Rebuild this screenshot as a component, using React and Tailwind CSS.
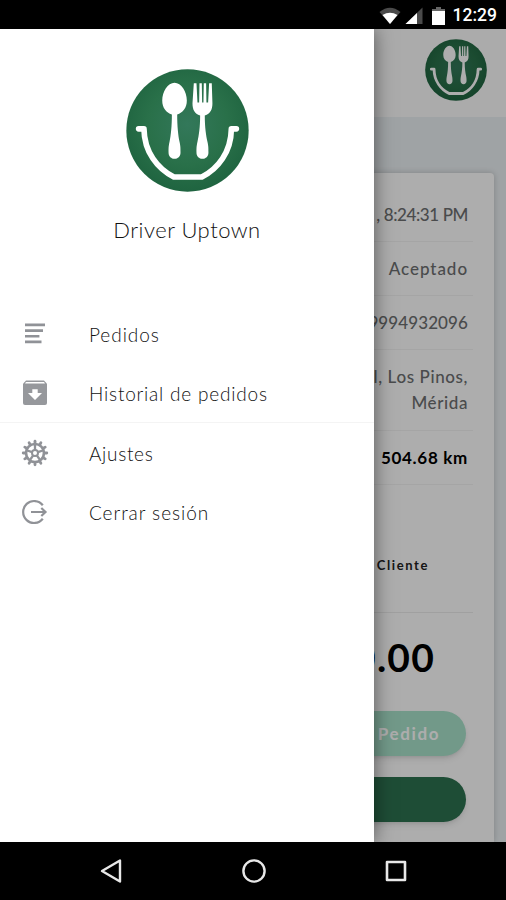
import React from 'react'

const MENU = [
  { label: 'Pedidos', icon: OrdersIcon, tracking: 'tracking-[0.95px]' },
  { label: 'Historial de pedidos', icon: ArchiveIcon, tracking: 'tracking-[0.8px]' },
  { label: 'Ajustes', icon: GearIcon, tracking: 'tracking-[0.7px]', divider: true },
  { label: 'Cerrar sesión', icon: LogoutIcon, tracking: 'tracking-[0.95px]' },
];

const TEETH = [0, 30, 60, 90, 120, 150, 180, 210, 240, 270, 300, 330];
const SPOKES = [0, 72, 144, 216, 288];

function Logo({ className }) {
  return (
    <svg viewBox="0 0 370 370" className={className}>
      <defs>
        <radialGradient id="plate" cx="50%" cy="45%" r="55%">
          <stop offset="0" stopColor="#33785a" />
          <stop offset="0.6" stopColor="#297049" />
          <stop offset="1" stopColor="#1f6440" />
        </radialGradient>
      </defs>
      <circle cx="185" cy="185" r="184" fill="url(#plate)" />
      <g fill="#fff">
        {/* spoon */}
        <path d="M146 41c20 0 37 27 37 54 0 22-12 37-29 42 0 36 3 62 7 82 3 14 3 18 3 32 0 12-8 19-18 19s-18-7-18-19c0-14 0-18 3-32 4-20 7-46 7-82-17-5-29-20-29-42 0-27 17-54 37-54z" />
        {/* fork */}
        <path d="M204 43h8l3 58h5l1-58h7l1 58h4l1-58h7l1 58h5l3-58h8l2 60c0 19-6 31-23 37 0 36 4 60 8 79 3 14 3 18 3 32 0 12-8 19-18 19s-18-7-18-19c0-14 0-18 3-32 4-19 8-43 8-79-17-6-23-18-23-37z" />
      </g>
      <path
        d="M38 180h16C55 250 95 300 144 325h84C277 300 316 250 317 180h15"
        fill="none"
        stroke="#fff"
        strokeWidth="17"
        strokeLinecap="round"
        strokeLinejoin="round"
      />
    </svg>
  );
}

function OrdersIcon() {
  return (
    <svg viewBox="0 0 28 28" className="h-7 w-7" fill="#909297">
      <path d="M4 4.500h20v2.700H4zM4 10.200h18v2.700H4zM4 15.900h14.400v2.700H4zM4 21.600h16.500v2.700H4z" />
    </svg>
  );
}

function ArchiveIcon() {
  return (
    <svg viewBox="0 0 28 28" className="h-7 w-7">
      <path d="M5 1.600h18l3 3.200v19.300a2 2 0 0 1-2 2H4a2 2 0 0 1-2-2V4.800z" fill="#96989c" />
      <path d="M5 3h18l1 1.500H4z" fill="#fff" />
      <path d="M11.300 10.200h5.400v3.800h4.300L14 21l-7-7h4.300z" fill="#fff" />
    </svg>
  );
}

function GearIcon() {
  return (
    <svg viewBox="0 0 28 28" className="h-7 w-7 translate-y-px" fill="none" stroke="#909297">
      <circle cx="14" cy="14" r="9" strokeWidth="2.7" />
      <circle cx="14" cy="14" r="3" strokeWidth="2" />
      {TEETH.map(a => (
        <path key={a} d="M14 4V2.200" strokeWidth="2.8" strokeLinecap="round" transform={`rotate(${a} 14 14)`} />
      ))}
      {SPOKES.map(a => (
        <path key={a} d="M14 11V5" strokeWidth="2.3" transform={`rotate(${a} 14 14)`} />
      ))}
    </svg>
  );
}

function LogoutIcon() {
  return (
    <svg viewBox="0 0 28 28" className="h-7 w-7" fill="none" stroke="#909297" strokeWidth="2.2">
      <path d="M21.800 7.200A11 11 0 1 0 21.800 20.800" />
      <path d="M10 14h14.500M20.300 10l4.200 4-4.200 4" />
    </svg>
  );
}

function StatusBar() {
  return (
    <div className="flex h-[29px] shrink-0 items-center justify-end bg-black pr-[9px] pt-[3px]">
      <svg viewBox="0 0 22 18" className="mr-1 h-[18px] w-[22px]">
        <path d="M0.5 5Q11-3.500 21.500 5L11 17z" fill="#4a4a4a" />
        <path d="M3.500 8Q11 3.500 18.500 8L11 17z" fill="#fff" />
      </svg>
      <svg viewBox="0 0 18 18" className="mr-[9px] h-[18px] w-[18px]">
        <path d="M17.500 0.500V17H0.500z" fill="#4a4a4a" />
        <path d="M12 6V17H0.500z" fill="#fff" />
      </svg>
      <svg viewBox="0 0 13 18" className="mr-2 h-[18px] w-[13px]">
        <path d="M4 0h5v2h4v16H0V2h4z" fill="#fff" />
        <path d="M4 0h5v2h4v2H0V2h4z" fill="#666" />
      </svg>
      <span className="font-['Roboto',sans-serif] text-[17.500px] font-medium leading-none text-white">12:29</span>
    </div>
  );
}

function Row({ children, className = '' }) {
  return (
    <div className={`mr-[21px] border-b border-[#f4f4f4] py-[14px] pr-[5px] text-right text-[17px] ${className}`}>
      {children}
    </div>
  );
}

function OrderPage() {
  return (
    <div className="flex h-full flex-col bg-[#ebf0f3] font-['Lato',sans-serif] text-[#6d6f71]">
      <div className="flex h-[88px] shrink-0 items-start justify-end bg-[#fdfdfd] pr-[19px] pt-[10px]">
        <Logo className="h-[62px] w-[62px]" />
      </div>
      <div className="mr-3 mt-14 flex flex-1 flex-col rounded-t bg-white pt-[15px] shadow-[0_0_6px_rgba(0,0,0,0.2)]">
        <Row className="font-medium leading-[25px] tracking-[-0.4px]">, 8:24:31 PM</Row>
        <Row className="font-medium leading-[25px] tracking-[0.95px]">Aceptado</Row>
        <Row className="font-medium leading-[25px] tracking-[0.1px]">9994932096</Row>
        <Row className="font-medium leading-[26px] tracking-[0.6px]">l, Los Pinos,<br />Mérida</Row>
        <Row className="font-bold leading-[25px] tracking-[0.7px] text-black">504.68 km</Row>
        <div className="mr-[21px] flex h-[128px] items-start justify-end border-b border-[#ececec] pr-11 pt-[70px]">
          <span className="text-[13px] font-bold leading-5 tracking-[1.6px] text-[#222]">Cliente</span>
        </div>
        <p className="mt-[19px] pr-[59px] text-right text-[39px] font-bold leading-[50px] tracking-[1.2px] text-black">0.00</p>
        <button className="ml-auto mr-7 mt-[29px] h-[45px] w-[400px] shrink-0 rounded-full bg-[#a9e2cb] pr-[26px] text-right text-[17px] font-bold tracking-[1.6px] text-white shadow-md">
          Pedido
        </button>
        <button className="ml-auto mr-7 mt-[21px] h-[45px] w-[400px] shrink-0 rounded-full bg-[#2d7250] shadow-md" />
      </div>
    </div>
  );
}

function Drawer() {
  return (
    <aside className="absolute left-0 top-0 flex h-full w-[374px] flex-col bg-white font-['Lato',sans-serif] font-light shadow-[0_0_18px_rgba(0,0,0,0.5)]">
      <div className="flex flex-col items-center pt-[40px]">
        <Logo className="h-[123px] w-[123px]" />
        <h1 className="mt-[22px] text-[22px] leading-8 tracking-[0.5px] text-[#111]">Driver Uptown</h1>
      </div>
      <nav className="mt-[59px] flex flex-col">
        {MENU.map(({ label, icon: Icon, tracking, divider }) => (
          <React.Fragment key={label}>
            {divider && <hr className="-mt-0.5 mb-px border-[#f4f4f4]" />}
            <a className={`flex h-[59.500px] items-center gap-10 pl-[21px] text-[19px] text-[#111] ${tracking}`}>
              <span className="pb-[3px]"><Icon /></span>
              <span>{label}</span>
            </a>
          </React.Fragment>
        ))}
      </nav>
    </aside>
  );
}

function NavBar() {
  return (
    <div className="flex h-[58px] shrink-0 items-center justify-between bg-black pl-[99px] pr-[98px]">
      <svg viewBox="0 0 24 26" className="h-[26px] w-6" fill="none" stroke="#e8e8e8" strokeWidth="2.4" strokeLinejoin="round">
        <path d="M21 2.500V23.500L3 13z" />
      </svg>
      <svg viewBox="0 0 26 26" className="h-[26px] w-[26px]" fill="none" stroke="#e8e8e8" strokeWidth="2.4">
        <circle cx="13" cy="13" r="10.600" />
      </svg>
      <svg viewBox="0 0 24 24" className="h-6 w-6" fill="none" stroke="#e8e8e8" strokeWidth="2.6" strokeLinejoin="round">
        <path d="M3 3h18v18H3z" />
      </svg>
    </div>
  );
}

export default function App() {
  return (
    <div className="flex h-[900px] w-[506px] flex-col overflow-hidden bg-black">
      <StatusBar />
      <main className="relative min-h-0 flex-1 overflow-hidden">
        <OrderPage />
        <div className="absolute inset-0 bg-black/32" />
        <Drawer />
      </main>
      <NavBar />
    </div>
  );
}
